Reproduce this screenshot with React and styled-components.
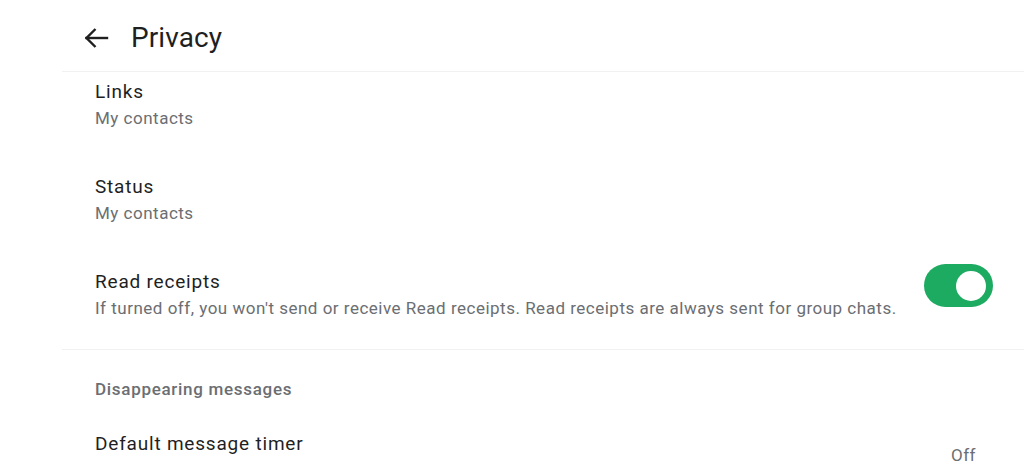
import React from "react";
import styled, { createGlobalStyle } from "styled-components";

const Global = createGlobalStyle`
  html, body { margin: 0; padding: 0; background: #ffffff; }
  body { font-family: Roboto, "Noto Sans", "Liberation Sans", sans-serif; overflow: hidden; }
  #root { width: 1024px; height: 463px; overflow: hidden; }
`;

const Page = styled.div`
  width: 1024px;
  height: 463px;
  display: flex;
  background: #fff;
  overflow: hidden;
`;

const Gutter = styled.div`
  width: 62px;
  flex: none;
`;

const Panel = styled.main`
  flex: 1;
  display: flex;
  flex-direction: column;
  min-width: 0;
`;

const Header = styled.header`
  height: 72px;
  box-sizing: border-box;
  flex: none;
  display: flex;
  align-items: center;
  border-bottom: 1px solid #f1f1f1;
  padding: 4px 0 0 20px;
  gap: 21px;
`;

const BackButton = styled.button`
  width: 28px;
  height: 28px;
  border: 0;
  background: none;
  padding: 0;
  display: flex;
  align-items: center;
  justify-content: center;
  color: #1f1f1f;
`;

const Title = styled.h1`
  margin: 0;
  font-size: 28px;
  font-weight: 400;
  color: #1f1f1f;
  line-height: 34px;
  letter-spacing: 0.1px;
`;

const List = styled.div`
  display: flex;
  flex-direction: column;
`;

const Row = styled.div`
  display: flex;
  align-items: ${p => p.$align ?? "center"};
  padding: ${p => p.$top ?? 21}px ${p => p.$right ?? 31}px ${p => p.$bottom ?? 20}px 33px;
  gap: 24px;
`;

const Texts = styled.div`
  flex: 1;
  min-width: 0;
  display: flex;
  flex-direction: column;
`;

const ItemTitle = styled.div`
  font-size: 19px;
  line-height: 29px;
  letter-spacing: 0.8px;
  color: #1f1f1f;
`;

const ItemSub = styled.div`
  font-size: 17px;
  line-height: 25px;
  letter-spacing: 0.5px;
  color: #6b6e72;
  white-space: nowrap;
`;

const Divider = styled.div`
  height: 1px;
  background: #f1f1f1;
`;

const SectionLabel = styled.div`
  font-size: 17px;
  font-weight: 500;
  line-height: 24px;
  letter-spacing: 0.7px;
  color: #6b6e72;
  padding: 27px 33px 28px;
`;

const Value = styled.div`
  font-size: 17px;
  letter-spacing: 0.5px;
  color: #6b6e72;
  margin-top: -2px;
`;

const Toggle = styled.div`
  width: 69px;
  height: 43px;
  border-radius: 22px;
  background: #1daa61;
  flex: none;
  display: flex;
  align-items: center;
  justify-content: flex-end;
  padding-right: 7px;
  box-sizing: border-box;
  margin-top: -3px;
`;

const Knob = styled.div`
  width: 30px;
  height: 30px;
  border-radius: 50%;
  background: #fff;
`;

export default function App() {
  return (
    <Page>
      <Global />
      <Gutter />
      <Panel>
        <Header>
          <BackButton aria-label="Back">
            <svg width="26" height="24" viewBox="0 0 26 24" fill="none" stroke="currentColor" strokeWidth="2.4" strokeLinecap="square">
              <path d="M3.5 12H24" />
              <path d="M12.5 3L3.5 12L12.5 21" strokeLinecap="butt" />
            </svg>
          </BackButton>
          <Title>Privacy</Title>
        </Header>
        <List>
          <Row $top={5}>
            <Texts>
              <ItemTitle>Links</ItemTitle>
              <ItemSub>My contacts</ItemSub>
            </Texts>
          </Row>
          <Row>
            <Texts>
              <ItemTitle>Status</ItemTitle>
              <ItemSub>My contacts</ItemSub>
            </Texts>
          </Row>
          <Row $bottom={28} $align="flex-start">
            <Texts>
              <ItemTitle>Read receipts</ItemTitle>
              <ItemSub>If turned off, you won't send or receive Read receipts. Read receipts are always sent for group chats.</ItemSub>
            </Texts>
            <Toggle role="switch" aria-checked="true">
              <Knob />
            </Toggle>
          </Row>
          <Divider />
          <SectionLabel>Disappearing messages</SectionLabel>
          <Row $top={0} $right={48}>
            <Texts>
              <ItemTitle>Default message timer</ItemTitle>
              <ItemSub>Start new chats with disappearing messages set to your timer</ItemSub>
            </Texts>
            <Value>Off</Value>
          </Row>
        </List>
      </Panel>
    </Page>
  );
}
